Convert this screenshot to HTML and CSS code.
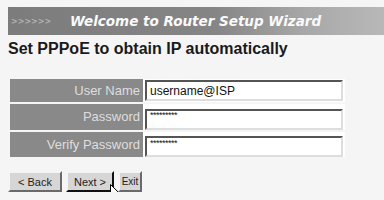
FILE: index.html
```html
<!DOCTYPE html>
<html lang="en">
<head>
  <meta charset="UTF-8">
  <title>Router Setup Wizard</title>
  <link rel="stylesheet" href="styles.css">
</head>
<body>
  <div class="page">
    <!-- banner -->
    <div class="banner">
      <span class="arrows">&gt;&gt;&gt;&gt;&gt;&gt;</span>
      <span class="title">Welcome to Router Setup Wizard</span>
    </div>

    <h1>Set PPPoE to obtain IP automatically</h1>

    <!-- account form -->
    <table class="form">
      <tr>
        <td class="label">User Name</td>
        <td class="field"><input type="text" value="username@ISP"></td>
      </tr>
      <tr>
        <td class="label">Password</td>
        <td class="field"><input type="text" class="pw" value="*********"></td>
      </tr>
      <tr>
        <td class="label">Verify Password</td>
        <td class="field"><input type="text" class="pw" value="*********"></td>
      </tr>
    </table>

    <div class="buttons">
      <button class="btn back">&lt; Back</button>
      <button class="btn next">Next &gt;</button>
      <button class="btn exit">Exit</button>
      <svg class="cursor" width="12" height="19" viewBox="0 0 12 19">
        <path d="M0.5 0.5 L0.5 15 L4 11.5 L6.5 17.5 L8.5 16.6 L6 10.8 L11 10.8 Z" fill="#fff" stroke="#000" stroke-width="1"/>
      </svg>
    </div>
  </div>
</body>
</html>
```

FILE: styles.css
```css
body {
  margin: 0;
  background-color: #f5f5f5;
  font-family: "Liberation Sans", Arial, sans-serif;
  color: #111;
}

.page {
  padding: 7px 0 0 8px;
}

.banner {
  height: 28px;
  display: flex;
  align-items: center;
  background: linear-gradient(90deg, #7c7c7c 0%, #858585 55%, #a9a9a9 80%, #b8b8b8 100%);
}

.arrows {
  width: 52px;
  padding-left: 3px;
  font-size: 8px;
  font-weight: bold;
  color: #b4b4b4;
  font-family: "DejaVu Sans", sans-serif;
}

.title {
  margin-left: 7px;
  font-family: "DejaVu Sans", sans-serif;
  font-style: italic;
  font-weight: bold;
  font-size: 13.5px;
  color: #fafafa;
}

h1 {
  margin: 4px 0 0 0;
  font-size: 16px;
  font-weight: bold;
  line-height: 20px;
  color: #1a1a1a;
}

.form {
  margin: 18px 0 0 2px;
  border-collapse: separate;
  border-spacing: 0 2px;
}

.form td {
  padding: 0;
  height: 23px;
}

.label {
  width: 130px;
  padding-right: 3px !important;
  background-color: #898989;
  color: #dedede;
  font-size: 13px;
  text-align: right;
}

.field {
  background-color: #fff;
  width: 202px;
}

.field input {
  box-sizing: border-box;
  width: 198px;
  height: 21px;
  margin: 0 0 0 2px;
  padding: 0 3px;
  border: 2px solid;
  border-color: #555 #ddd #ddd #555;
  font-family: "Liberation Sans", Arial, sans-serif;
  font-size: 12px;
  color: #111;
  background: #fff;
}

.field input.pw {
  padding: 0 0 8px 3px;
  font-size: 9px;
  letter-spacing: -0.5px;
}

.buttons {
  position: relative;
  display: flex;
  gap: 4px;
  margin-top: 12px;
}

.btn {
  height: 21px;
  padding: 0 4px;
  font-family: "Liberation Sans", Arial, sans-serif;
  font-size: 11px;
  color: #222;
  background-color: #d6d6d6;
  border: 2px solid;
  border-color: #f4f4f4 #6a6a6a #6a6a6a #f4f4f4;
}

.back {
  width: 54px;
}

.next {
  width: 48px;
  border-bottom-color: #111;
  border-right-color: #111;
}

.exit {
  width: 24px;
  padding: 0;
  font-size: 10px;
}

.cursor {
  position: absolute;
  left: 102px;
  top: 13px;
}
```
